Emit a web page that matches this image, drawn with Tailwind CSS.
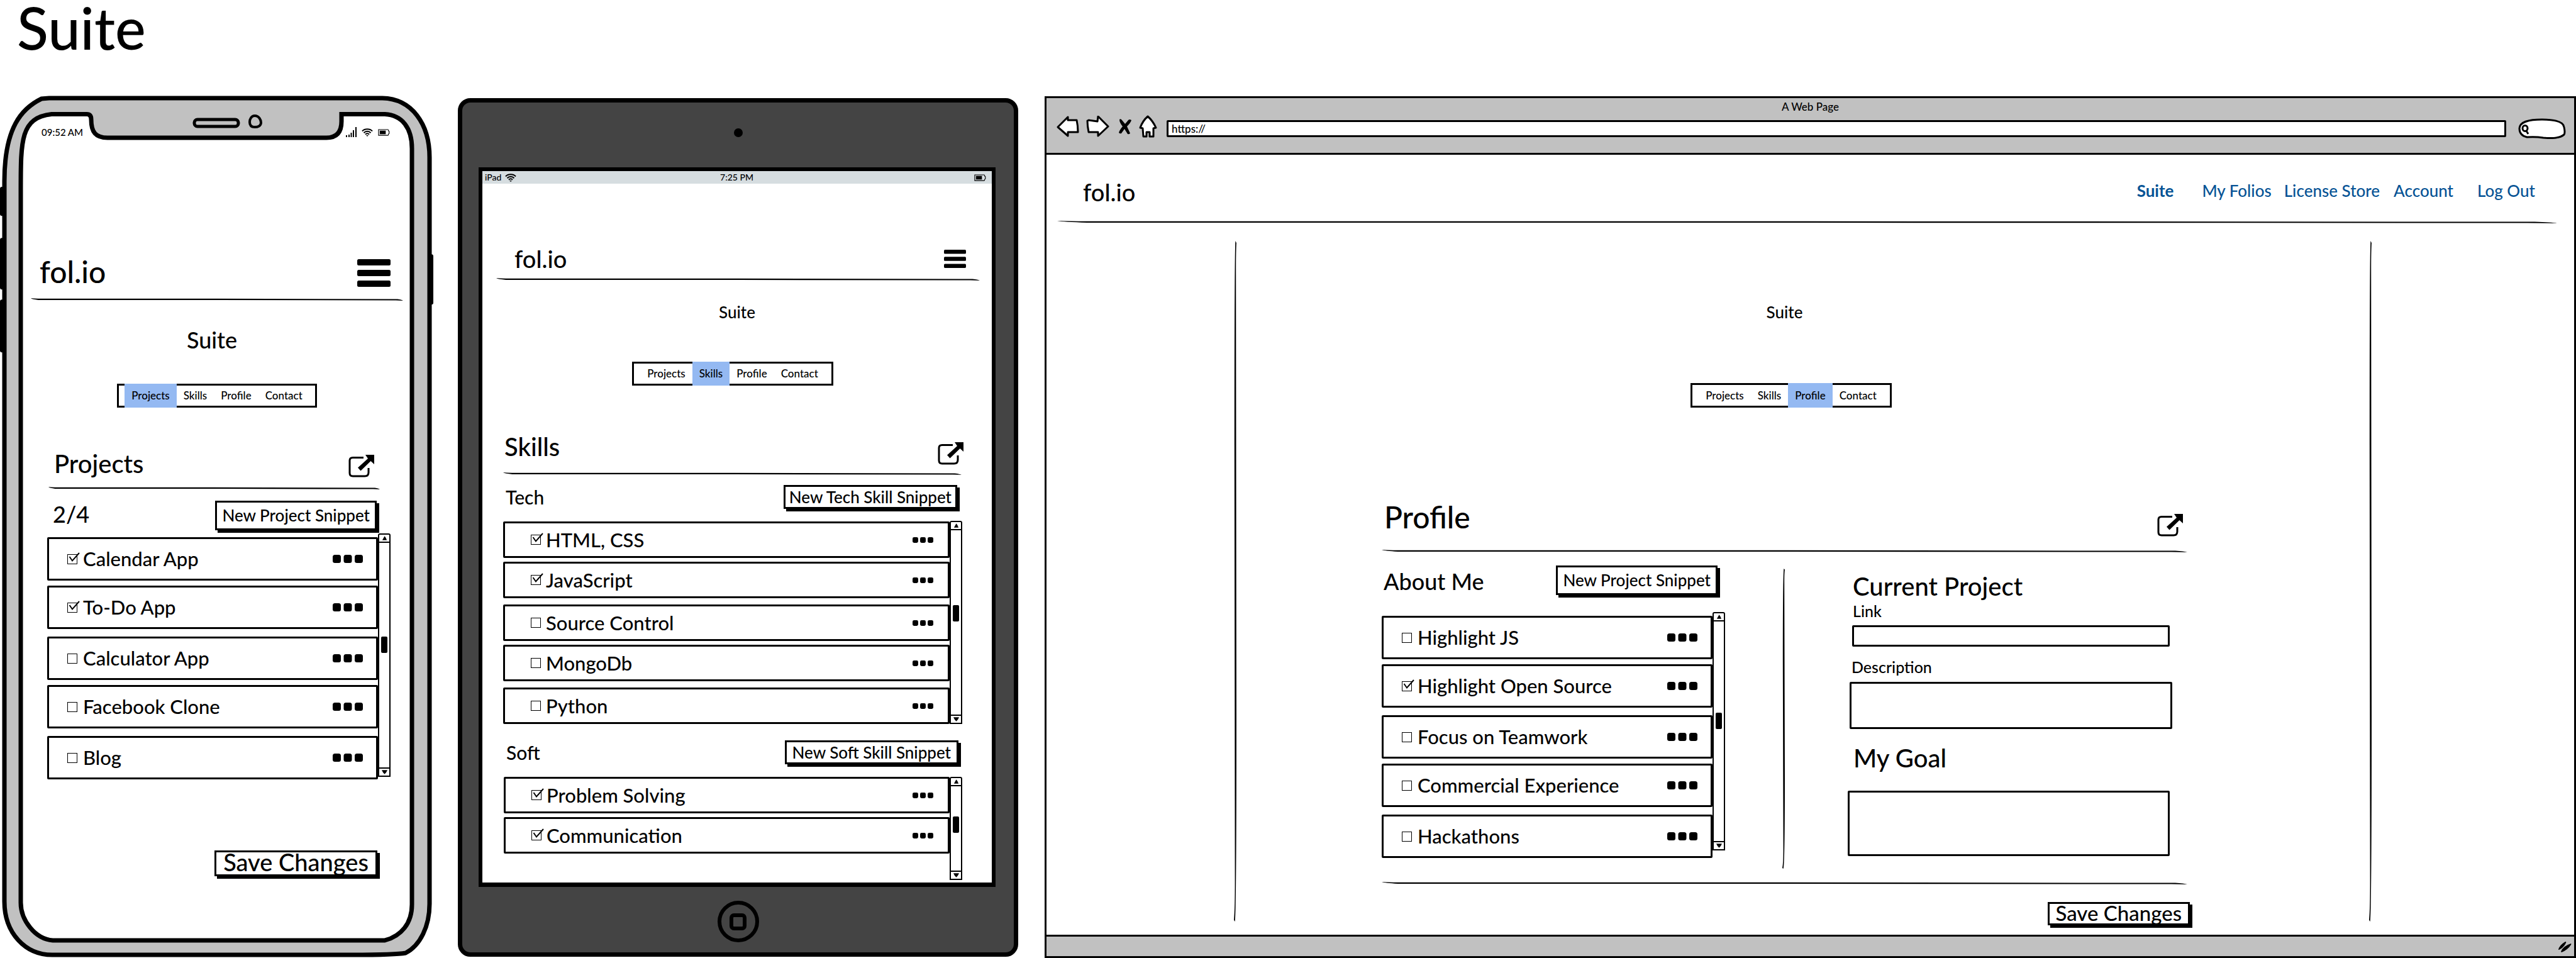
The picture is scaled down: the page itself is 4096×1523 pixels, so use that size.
<!DOCTYPE html>
<html lang="en">
<head>
<meta charset="utf-8">
<title>fol.io – Suite wireframes</title>
<script src="https://cdn.jsdelivr.net/npm/@tailwindcss/browser@4"></script>
</head>
<body class="flex min-h-screen flex-col bg-white font-['Lato',sans-serif] font-medium text-black">

<!-- Shared glyphs -->
<svg class="hidden" aria-hidden="true">
  <symbol id="rule" viewBox="0 0 1000 5" preserveAspectRatio="none"><path d="M0 0 Q8 1 20 1 L500 1 L985 2 Q996 3 1000 5 Q990 4.500 980 4.500 L500 3.800 L20 3.600 Q4 2.500 0 0Z"/></symbol>
  <symbol id="vrule" viewBox="0 0 5 1000" preserveAspectRatio="none"><path d="M3 0 L5 3 Q4 14 4 40 L5 700 Q5 985 2 1000 L0 998 Q2 980 2 940 L1 300 Q1 20 3 0Z"/></symbol>
  <symbol id="wifi" viewBox="0 0 18 13"><g fill="none" stroke="#000" stroke-width="2"><path d="M1 4.500C5 0.300 13 0.300 17 4.500"/><path d="M3.500 7.200C6.500 4 11.500 4 14.500 7.200"/><path d="M6 9.700C7.700 7.900 10.300 7.900 12 9.700"/></g><path d="M7 11h4l-2 2z"/></symbol>
  <symbol id="battery" viewBox="0 0 20 11"><path fill="none" stroke="#000" stroke-width="1.200" d="M1 .8h15.500q1 0 1 1v1l1.200 1v3.500l-1.200 1v1q0 1-1 1H1z"/><path d="M3 2.500h10v6H3z"/></symbol>
  <symbol id="open" viewBox="0 0 41 36"><path fill="none" stroke="#000" stroke-width="3" d="M24 4.500H7Q2 4.500 2 9V29Q2 34 7 34H26Q32 34 32 28V21"/><path d="M27 0H41V15L35.500 10 19.500 25.500 15 20.500 31 6Z"/></symbol>
  <symbol id="menu" viewBox="0 0 53 44" preserveAspectRatio="none"><rect width="53" height="10" rx="2.500"/><rect y="17" width="53" height="10" rx="2.500"/><rect y="34" width="53" height="10" rx="2.500"/></symbol>
  <symbol id="dots" viewBox="0 0 48 13"><rect width="13" height="13" rx="3.500"/><rect x="17.500" width="13" height="13" rx="3.500"/><rect x="35" width="13" height="13" rx="3.500"/></symbol>
  <symbol id="tick" viewBox="0 0 20 18"><path fill="none" stroke="#000" stroke-width="2" d="M3.500 8 8 14.500 19 2"/></symbol>
  <symbol id="up" viewBox="0 0 10 7"><path d="M1 7Q4 2 5 0Q7 2 9 7Z"/></symbol>
  <symbol id="down" viewBox="0 0 10 7"><path d="M0 0H10Q8 5 5 7Q2 5 0 0Z"/></symbol>
</svg>

<header class="h-[152px] px-[27px]">
  <h1 class="text-[92px] leading-[88px]">Suite</h1>
</header>

<main class="grid flex-1 grid-cols-[690fr_891fr_2439fr] gap-x-[38px]">

  <!-- Phone -->
  <article class="relative">
    <svg class="absolute inset-0 h-full w-full" viewBox="0 0 690 1371" preserveAspectRatio="none" aria-hidden="true">
      <rect x="0" y="145" width="8" height="46" rx="3"/><rect x="0" y="226" width="8" height="82" rx="3"/><rect x="0" y="324" width="8" height="84" rx="3"/><rect x="682" y="252" width="7" height="80" rx="3"/>
      <path fill="#c1c1c1" stroke="#000" stroke-width="7" d="M78 4H608C655 5 683 45 683 98V1284C683 1320 668 1350 645 1362Q630 1365 560 1365H85C40 1366 7 1330 7 1280V136C7 50 35 20 66 5Z"/>
      <path fill="#fff" stroke="#000" stroke-width="7" d="M82 29.500H138Q145 29.500 145 38C145 58 152 67 171 67H519C537 67 543 56 543 41V29.500H612C640 31 655 52 655 84V1285C655 1315 638 1335 612 1342H84C56 1340 33 1310 33 1282V150C33 70 33 35 82 29.500Z"/>
      <rect x="309" y="38" width="70" height="11" rx="5" fill="#c1c1c1" stroke="#000" stroke-width="5"/>
      <path d="M405 32C412 32 415 39 415 43C415 48 410 50 405 50C400 50 397 48 397 42C397 37 400 32 405 32Z" fill="#c1c1c1" stroke="#000" stroke-width="4"/>
    </svg>
    <div class="relative flex flex-col pb-[120px] pt-[48px]">
      <div class="flex h-[20px] items-center justify-between pl-[66px] pr-[70px]">
        <span class="text-[15px] leading-[20px]">09:52 AM</span>
        <span class="flex h-[16px] items-center gap-[8px]">
          <svg class="h-[16px] w-[17px]" viewBox="0 0 17 16"><path d="M0 13h2v3H0zM4 12h2v4H4zM7.500 9h2v7h-2zM11 5h2v11h-2zM15 0h2v16h-2z"/></svg>
          <svg class="h-[13px] w-[18px]"><use href="#wifi"/></svg>
          <svg class="h-[11px] w-[19px]"><use href="#battery"/></svg>
        </span>
      </div>

      <div class="mt-[188px] flex items-end justify-between pl-[63px] pr-[69px]">
        <span class="text-[48px] leading-[48px]">fol.io</span>
        <button aria-label="Menu"><svg class="h-[44px] w-[53px]"><use href="#menu"/></svg></button>
      </div>
      <div class="mx-[49px] mt-[18px] flex"><svg class="h-[4px] w-full"><use href="#rule"/></svg></div>
      <h2 class="mt-[44px] pr-4 text-center text-[36px] leading-[36px]">Suite</h2>

      <nav class="mx-auto mt-[52px] flex h-[38px] w-[318px] justify-center border-[3px] border-black text-[17px] leading-[32px]">
        <a href="#" class="-my-[3px] bg-[#94b9f2] px-[11px] py-[3px]">Projects</a>
        <a href="#" class="px-[11px]">Skills</a>
        <a href="#" class="px-[11px]">Profile</a>
        <a href="#" class="px-[11px]">Contact</a>
      </nav>

      <div class="mt-[67px] flex items-start justify-between pl-[86px] pr-[95px]">
        <h3 class="mt-0.5 text-[40px] leading-[40px]">Projects</h3>
        <button class="mt-2" aria-label="Open projects"><svg class="h-[36px] w-[41px]"><use href="#open"/></svg></button>
      </div>
      <div class="ml-[77px] mr-[86px] mt-[15px] flex"><svg class="h-[4px] w-full"><use href="#rule"/></svg></div>

      <div class="mt-[18px] flex items-start justify-between pl-[84px] pr-[91px]">
        <span class="text-[36px] leading-[42px]">2/4</span>
        <button class="border-[3px] border-black bg-white px-[8px] text-[26px] leading-[41px] shadow-[4px_4px_0_#000]">New Project Snippet</button>
      </div>

      <div class="mt-[5px] flex pl-[75px] pr-[69px]">
        <ul class="flex-1 pt-[6px] text-[31px] [&>li]:flex [&>li]:h-[69px] [&>li]:items-center [&>li]:rounded-[2px] [&>li]:border-[3px] [&>li]:border-black [&>li]:pl-[29px] [&>li]:pr-[21px] [&>li:nth-child(even)]:mb-3 [&>li:nth-child(odd)]:mb-2 [&>li:last-child]:mb-0!">
          <li><label class="flex grow items-center gap-[9px]"><span class="relative size-4"><input type="checkbox" checked class="peer block size-4 appearance-none border border-black"><svg class="pointer-events-none absolute -top-1 left-0 hidden h-[18px] w-[20px] peer-checked:block"><use href="#tick"/></svg></span>Calendar App</label><button aria-label="More"><svg class="h-[13px] w-[48px]"><use href="#dots"/></svg></button></li>
          <li><label class="flex grow items-center gap-[9px]"><span class="relative size-4"><input type="checkbox" checked class="peer block size-4 appearance-none border border-black"><svg class="pointer-events-none absolute -top-1 left-0 hidden h-[18px] w-[20px] peer-checked:block"><use href="#tick"/></svg></span>To-Do App</label><button aria-label="More"><svg class="h-[13px] w-[48px]"><use href="#dots"/></svg></button></li>
          <li><label class="flex grow items-center gap-[9px]"><input type="checkbox" class="size-4 appearance-none border border-black">Calculator App</label><button aria-label="More"><svg class="h-[13px] w-[48px]"><use href="#dots"/></svg></button></li>
          <li><label class="flex grow items-center gap-[9px]"><input type="checkbox" class="size-4 appearance-none border border-black">Facebook Clone</label><button aria-label="More"><svg class="h-[13px] w-[48px]"><use href="#dots"/></svg></button></li>
          <li><label class="flex grow items-center gap-[9px]"><input type="checkbox" class="size-4 appearance-none border border-black">Blog</label><button aria-label="More"><svg class="h-[13px] w-[48px]"><use href="#dots"/></svg></button></li>
        </ul>
        <div class="mb-1 flex w-[20px] flex-col items-center rounded-t-[3px] border-2 border-black" aria-hidden="true">
          <span class="flex h-[13px] w-full items-center justify-center border-b-2 border-black"><svg class="h-[7px] w-[9px]"><use href="#up"/></svg></span>
          <span class="mt-[149px] h-[26px] w-[10px] rounded-[2px] bg-black"></span>
          <span class="mt-auto flex h-[13px] w-full items-center justify-center border-t-2 border-black"><svg class="h-[7px] w-[9px]"><use href="#down"/></svg></span>
        </div>
      </div>

      <div class="mt-[113px] flex justify-end pr-[90px]">
        <button class="border-[3px] border-black bg-white px-[11px] pb-[5px] text-[38px] leading-[30px] shadow-[4px_4px_0_#000]">Save Changes</button>
      </div>
    </div>
  </article>

  <!-- Tablet -->
  <article class="mb-[3px] mt-1 flex flex-col rounded-[20px] border-[7px] border-black bg-[#444]">
    <span class="mx-auto mt-[41px] size-[14px] rounded-full bg-black"></span>
    <div class="ml-[26px] mr-[29px] mt-[48px] flex flex-1 flex-col border-[6px] border-b-[7px] border-black bg-white">
      <div class="grid h-[20px] grid-cols-3 items-center bg-[#d6dde0] pl-1 pr-[9px] text-[14px] leading-[20px]">
        <span class="flex items-center gap-[6px]">iPad <svg class="h-[13px] w-[18px]"><use href="#wifi"/></svg></span>
        <span class="pl-1 text-center">7:25 PM</span>
        <svg class="h-[11px] w-[19px] justify-self-end"><use href="#battery"/></svg>
      </div>

      <div class="mt-[99px] flex items-center justify-between pl-[51px] pr-[41px]">
        <span class="text-[38px] leading-[40px]">fol.io</span>
        <button aria-label="Menu"><svg class="h-[29px] w-[35px]"><use href="#menu"/></svg></button>
      </div>
      <div class="ml-[22px] mr-[19px] mt-[11px] flex"><svg class="h-[4px] w-full"><use href="#rule"/></svg></div>
      <h2 class="mt-[35px] text-center text-[26px] leading-[30px]">Suite</h2>

      <div class="mt-[64px] flex justify-center pr-[14px]">
        <nav class="flex h-[38px] w-[320px] justify-center border-[3px] border-black text-[17px] leading-[32px]">
          <a href="#" class="px-[11px]">Projects</a>
          <a href="#" class="-my-[3px] bg-[#94b9f2] px-[11px] py-[3px]">Skills</a>
          <a href="#" class="px-[11px]">Profile</a>
          <a href="#" class="px-[11px]">Contact</a>
        </nav>
      </div>

      <div class="mt-[75px] flex items-start justify-between pl-[35px] pr-[45px]">
        <h3 class="mt-0.5 text-[40px] leading-[40px]">Skills</h3>
        <button class="mt-[15px]" aria-label="Open skills"><svg class="h-[36px] w-[41px]"><use href="#open"/></svg></button>
      </div>
      <div class="ml-[33px] mr-[48px] mt-[12px] flex"><svg class="h-[4px] w-full"><use href="#rule"/></svg></div>

      <div class="mt-[16px] flex items-start justify-between pl-[37px] pr-[55px]">
        <h4 class="text-[30px] leading-[38px]">Tech</h4>
        <button class="border-[3px] border-black bg-white px-[6px] text-[26px] leading-[32px] shadow-[4px_4px_0_#000]">New Tech Skill Snippet</button>
      </div>
      <div class="mt-[19px] flex pl-[33px] pr-[47px]">
        <ul class="flex-1 pt-px text-[31px] [&>li]:flex [&>li]:h-[58px] [&>li]:items-center [&>li]:rounded-[2px] [&>li]:border-[3px] [&>li]:border-black [&>li]:pl-[41px] [&>li]:pr-[23px] [&>li:nth-child(even)]:mb-2.5 [&>li:nth-child(odd)]:mb-1.5 [&>li:last-child]:mb-0!">
          <li><label class="flex grow items-center gap-[8px]"><span class="relative size-4"><input type="checkbox" checked class="peer block size-4 appearance-none border border-black"><svg class="pointer-events-none absolute -top-1 left-0 hidden h-[18px] w-[20px] peer-checked:block"><use href="#tick"/></svg></span>HTML, CSS</label><button aria-label="More"><svg class="h-[9px] w-[33px]"><use href="#dots"/></svg></button></li>
          <li><label class="flex grow items-center gap-[8px]"><span class="relative size-4"><input type="checkbox" checked class="peer block size-4 appearance-none border border-black"><svg class="pointer-events-none absolute -top-1 left-0 hidden h-[18px] w-[20px] peer-checked:block"><use href="#tick"/></svg></span>JavaScript</label><button aria-label="More"><svg class="h-[9px] w-[33px]"><use href="#dots"/></svg></button></li>
          <li><label class="flex grow items-center gap-[8px]"><input type="checkbox" class="size-4 appearance-none border border-black">Source Control</label><button aria-label="More"><svg class="h-[9px] w-[33px]"><use href="#dots"/></svg></button></li>
          <li><label class="flex grow items-center gap-[8px]"><input type="checkbox" class="size-4 appearance-none border border-black">MongoDb</label><button aria-label="More"><svg class="h-[9px] w-[33px]"><use href="#dots"/></svg></button></li>
          <li><label class="flex grow items-center gap-[8px]"><input type="checkbox" class="size-4 appearance-none border border-black">Python</label><button aria-label="More"><svg class="h-[9px] w-[33px]"><use href="#dots"/></svg></button></li>
        </ul>
        <div class="flex w-[20px] flex-col items-center rounded-t-[3px] border-2 border-black" aria-hidden="true">
          <span class="flex h-[13px] w-full items-center justify-center border-b-2 border-black"><svg class="h-[7px] w-[9px]"><use href="#up"/></svg></span>
          <span class="mt-[119px] h-[26px] w-[10px] rounded-[2px] bg-black"></span>
          <span class="mt-auto flex h-[13px] w-full items-center justify-center border-t-2 border-black"><svg class="h-[7px] w-[9px]"><use href="#down"/></svg></span>
        </div>
      </div>

      <div class="mt-[26px] flex items-start justify-between pl-[38px] pr-[53px]">
        <h4 class="text-[30px] leading-[38px]">Soft</h4>
        <button class="border-[3px] border-black bg-white px-[9px] text-[26px] leading-[32px] shadow-[4px_4px_0_#000]">New Soft Skill Snippet</button>
      </div>
      <div class="mb-1 mt-[20px] flex pl-[34px] pr-[47px]">
        <ul class="flex-1 text-[31px] [&>li]:flex [&>li]:h-[58px] [&>li]:items-center [&>li]:rounded-[2px] [&>li]:border-[3px] [&>li]:border-black [&>li]:pl-[41px] [&>li]:pr-[23px] [&>li:first-child]:mb-1.5">
          <li><label class="flex grow items-center gap-[8px]"><span class="relative size-4"><input type="checkbox" checked class="peer block size-4 appearance-none border border-black"><svg class="pointer-events-none absolute -top-1 left-0 hidden h-[18px] w-[20px] peer-checked:block"><use href="#tick"/></svg></span>Problem Solving</label><button aria-label="More"><svg class="h-[9px] w-[33px]"><use href="#dots"/></svg></button></li>
          <li><label class="flex grow items-center gap-[8px]"><span class="relative size-4"><input type="checkbox" checked class="peer block size-4 appearance-none border border-black"><svg class="pointer-events-none absolute -top-1 left-0 hidden h-[18px] w-[20px] peer-checked:block"><use href="#tick"/></svg></span>Communication</label><button aria-label="More"><svg class="h-[9px] w-[33px]"><use href="#dots"/></svg></button></li>
        </ul>
        <div class="flex h-[164px] w-[20px] flex-col items-center rounded-t-[3px] border-2 border-black" aria-hidden="true">
          <span class="flex h-[13px] w-full items-center justify-center border-b-2 border-black"><svg class="h-[7px] w-[9px]"><use href="#up"/></svg></span>
          <span class="mt-[48px] h-[26px] w-[10px] rounded-[2px] bg-black"></span>
          <span class="mt-auto flex h-[13px] w-full items-center justify-center border-t-2 border-black"><svg class="h-[7px] w-[9px]"><use href="#down"/></svg></span>
        </div>
      </div>
    </div>
    <button class="mx-auto mb-[16px] mt-[22px] flex size-[66px] items-center justify-center rounded-full border-[6px] border-black" aria-label="Home">
      <span class="size-[27px] rounded-[7px] border-[6px] border-black"></span>
    </button>
  </article>

  <!-- Desktop browser -->
  <article class="mb-px ml-1 mt-px flex flex-col border-[3px] border-black">
    <div class="flex flex-col border-b-[3px] border-black bg-[#c1c1c1] pb-[23px] pt-1">
      <p class="text-center text-[17px] leading-[20px]">A Web Page</p>
      <div class="mt-0.5 flex h-[38px] items-center pl-4 pr-[13px]">
        <button aria-label="Back"><svg class="h-[34px] w-[36px]" viewBox="0 0 36 34"><path fill="#fff" stroke="#000" stroke-width="3" stroke-linejoin="round" d="M18 2 2 18 18 32V26H34Q34 16 32 7H18Z"/></svg></button>
        <button class="ml-[11px]" aria-label="Forward"><svg class="h-[34px] w-[37px]" viewBox="0 0 37 34"><path fill="#fff" stroke="#000" stroke-width="3" stroke-linejoin="round" d="M19 1 35 17 19 32V26H4Q2 16 2 8L4 7 18 9Z"/></svg></button>
        <button class="ml-[15px]" aria-label="Stop"><svg class="h-[25px] w-[20px]" viewBox="0 0 20 25"><path d="M1 1Q3-1 5 2L10 8 15 2Q17 0 20 2 19 6 13 12L18 23Q16 25 14 24L9 16 4 23Q2 24 0 22 1 18 6 12 1 6 1 1Z"/></svg></button>
        <button class="ml-[12px]" aria-label="Home page"><svg class="h-[36px] w-[29px]" viewBox="0 0 29 36"><path fill="#fff" stroke="#000" stroke-width="3" stroke-linejoin="round" d="M14 2Q22 9 27 20L23 21V34H17V27H12V34H7L6 21 2 20Q6 9 14 2Z"/></svg></button>
        <input aria-label="Address" value="https://" class="ml-[15px] mt-[6px] h-[27px] min-w-0 flex-1 rounded-[2px] border-[3px] border-black bg-white pl-[5px] text-[17px] leading-[20px]">
        <button class="ml-[19px] mt-[6px]" aria-label="Search"><svg class="h-[33px] w-[76px]" viewBox="0 0 76 33"><path fill="#fff" stroke="#000" stroke-width="3" d="M14 30C5 28 2 22 2 16C3 6 15 2 38 2C62 2 72 7 73 14Q75 23 73 26C66 32 50 32 40 31Q28 29 14 30Z"/><g fill="none" stroke="#000" stroke-width="3"><ellipse cx="11" cy="16" rx="4" ry="4.500"/><path d="M13 20 16 25"/></g></svg></button>
      </div>
    </div>

    <header class="mt-[39px] flex items-center justify-between pl-[58px] pr-[62px]">
      <span class="text-[38px] leading-[40px]">fol.io</span>
      <nav class="flex pb-1 text-[26px] leading-[30px] text-[#065395]">
        <a href="#" class="mr-[45px] font-bold">Suite</a>
        <a href="#" class="mr-[20px]">My Folios</a>
        <a href="#" class="mr-[22px]">License Store</a>
        <a href="#" class="mr-[38px]">Account</a>
        <a href="#">Log Out</a>
      </nav>
    </header>
    <div class="ml-[17px] mr-[27px] mt-[26px] flex"><svg class="h-[4px] w-full"><use href="#rule"/></svg></div>

    <div class="mb-[10px] ml-[298px] mr-[322px] mt-[28px] flex flex-1">
      <svg class="mb-[10px] h-[1082px] w-[4px]"><use href="#vrule"/></svg>
      <div class="flex flex-1 flex-col pt-[98px]">
        <h2 class="pr-[58px] text-center text-[26px] leading-[30px]">Suite</h2>
        <div class="mt-[98px] flex justify-center pr-[37px]">
          <nav class="flex h-[39px] w-[320px] justify-center border-[3px] border-black text-[17px] leading-[33px]">
            <a href="#" class="px-[11px]">Projects</a>
            <a href="#" class="px-[11px]">Skills</a>
            <a href="#" class="-my-[3px] bg-[#94b9f2] px-[11px] py-[3px]">Profile</a>
            <a href="#" class="px-[11px]">Contact</a>
          </nav>
        </div>

        <div class="mt-[148px] flex items-start justify-between pl-[235px] pr-[296px]">
          <h3 class="mt-0.5 text-[48px] leading-[48px]">Profile</h3>
          <button class="mt-[21px]" aria-label="Open profile"><svg class="h-[36px] w-[41px]"><use href="#open"/></svg></button>
        </div>
        <div class="ml-[231px] mr-[289px] mt-[21px] flex"><svg class="h-[4px] w-full"><use href="#rule"/></svg></div>

        <div class="ml-[231px] mr-[313px] flex items-start">
          <section class="mt-[21px] flex-[546]">
            <div class="flex items-start justify-between pl-[3px] pr-[12px]">
              <h4 class="text-[36px] leading-[51px]">About Me</h4>
              <button class="border-[3px] border-black bg-white px-[8px] text-[26px] leading-[41px] shadow-[4px_4px_0_#000]">New Project Snippet</button>
            </div>
            <div class="mt-[23px] flex">
              <ul class="flex-1 pt-[6px] text-[31px] [&>li]:flex [&>li]:h-[69px] [&>li]:items-center [&>li]:rounded-[2px] [&>li]:border-[3px] [&>li]:border-black [&>li]:pl-[29px] [&>li]:pr-[21px] [&>li:nth-child(even)]:mb-3 [&>li:nth-child(odd)]:mb-2 [&>li:last-child]:mb-0!">
                <li><label class="flex grow items-center gap-[9px]"><input type="checkbox" class="size-4 appearance-none border border-black">Highlight JS</label><button aria-label="More"><svg class="h-[13px] w-[48px]"><use href="#dots"/></svg></button></li>
                <li><label class="flex grow items-center gap-[9px]"><span class="relative size-4"><input type="checkbox" checked class="peer block size-4 appearance-none border border-black"><svg class="pointer-events-none absolute -top-1 left-0 hidden h-[18px] w-[20px] peer-checked:block"><use href="#tick"/></svg></span>Highlight Open Source</label><button aria-label="More"><svg class="h-[13px] w-[48px]"><use href="#dots"/></svg></button></li>
                <li><label class="flex grow items-center gap-[9px]"><input type="checkbox" class="size-4 appearance-none border border-black">Focus on Teamwork</label><button aria-label="More"><svg class="h-[13px] w-[48px]"><use href="#dots"/></svg></button></li>
                <li><label class="flex grow items-center gap-[9px]"><input type="checkbox" class="size-4 appearance-none border border-black">Commercial Experience</label><button aria-label="More"><svg class="h-[13px] w-[48px]"><use href="#dots"/></svg></button></li>
                <li><label class="flex grow items-center gap-[9px]"><input type="checkbox" class="size-4 appearance-none border border-black">Hackathons</label><button aria-label="More"><svg class="h-[13px] w-[48px]"><use href="#dots"/></svg></button></li>
              </ul>
              <div class="mb-3 flex w-[20px] flex-col items-center rounded-t-[3px] border-2 border-black" aria-hidden="true">
                <span class="flex h-[13px] w-full items-center justify-center border-b-2 border-black"><svg class="h-[7px] w-[9px]"><use href="#up"/></svg></span>
                <span class="mt-[145px] h-[26px] w-[10px] rounded-[2px] bg-black"></span>
                <span class="mt-auto flex h-[13px] w-full items-center justify-center border-t-2 border-black"><svg class="h-[7px] w-[9px]"><use href="#down"/></svg></span>
              </div>
            </div>
          </section>

          <svg class="ml-[91px] mr-[100px] mt-[26px] h-[477px] w-[4px]"><use href="#vrule"/></svg>

          <section class="mt-[34px] flex flex-[516] flex-col">
            <h4 class="pl-[8px] text-[40px] leading-[40px]">Current Project</h4>
            <label for="link" class="mt-1 pl-[8px] text-[25px] leading-[30px]">Link</label>
            <input id="link" class="ml-[7px] mr-1 mt-[8px] h-[34px] rounded-[2px] border-[3px] border-black">
            <label for="description" class="mt-[17px] pl-[6px] text-[25px] leading-[30px]">Description</label>
            <textarea id="description" class="ml-[3px] mt-[9px] block h-[75px] resize-none rounded-[2px] border-[3px] border-black"></textarea>
            <label for="goal" class="mt-[26px] pl-[9px] text-[40px] leading-[40px]">My Goal</label>
            <textarea id="goal" class="mr-1 mt-[32px] block h-[104px] resize-none rounded-[2px] border-[3px] border-black"></textarea>
          </section>
        </div>
        <div class="ml-[231px] mr-[289px] mt-[21px] flex"><svg class="h-[4px] w-full"><use href="#rule"/></svg></div>
        <div class="mt-[28px] flex justify-end pr-[285px]">
          <button class="border-[3px] border-black bg-white px-[10px] pb-[2px] text-[33px] leading-[29px] shadow-[4px_4px_0_#000]">Save Changes</button>
        </div>
      </div>
      <svg class="mb-[10px] h-[1082px] w-[4px]"><use href="#vrule"/></svg>
    </div>

    <footer class="flex h-[34px] items-center justify-end border-t-[3px] border-black bg-[#c1c1c1] pr-1">
      <svg class="h-[18px] w-[22px]" viewBox="0 0 22 18" aria-hidden="true"><path d="M1 14Q2 7 12 1Q14 1 13 3Q9 11 2 14ZM5 17Q8 8 21 4Q22 4 21 6Q16 14 6 18Z"/></svg>
    </footer>
  </article>
</main>
</body>
</html>
